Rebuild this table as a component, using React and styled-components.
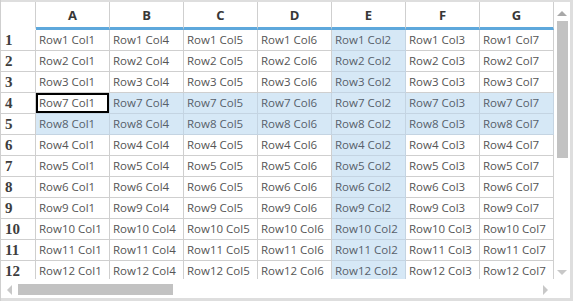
import React from "react";
import styled, { createGlobalStyle, css } from "styled-components";

const Global = createGlobalStyle`
  html, body { margin: 0; padding: 0; background: #fff; }
  body { font-family: "Open Sans", "Liberation Sans", sans-serif; }
`;

const Frame = styled.div`
  width: 573px;
  height: 301px;
  box-sizing: border-box;
  padding: 2px 3px 3px 1px;
  background: #dedede;
  border-left: 1px solid #cfcfcf;
  padding-left: 0;
`;

const Panel = styled.div`
  display: grid;
  grid-template-columns: 553px 16px;
  grid-template-rows: 277px 19px;
  background: #fff;
  height: 296px;
`;

const Viewport = styled.div`
  overflow: hidden;
  position: relative;
`;

const Grid = styled.div`
  display: grid;
  grid-template-columns: 35px repeat(7, 74px);
  grid-template-rows: 28px;
  grid-auto-rows: 21px;
  width: max-content;
`;

const Corner = styled.div`
  box-sizing: border-box;
  border-right: 1px solid #cfcfcf;
  border-bottom: 3px solid #fff;
`;

const ColHead = styled.div`
  box-sizing: border-box;
  border-right: 1px solid #cfcfcf;
  border-bottom: 3px solid #5ea8dc;
  display: flex;
  align-items: center;
  justify-content: center;
  font-family: "Open Sans", "Liberation Sans", sans-serif;
  font-weight: 700;
  font-size: 13px;
  color: #373737;
  padding-top: 1px;
`;

const RowHead = styled.div`
  box-sizing: border-box;
  border-right: 1px solid #cfcfcf;
  border-bottom: 1px solid #cfcfcf;
  padding-left: 4px;
  font-family: "Liberation Serif", "DejaVu Serif", serif;
  font-weight: 700;
  font-size: 15px;
  line-height: 21px;
  color: #3d3d3d;
`;

const Cell = styled.div`
  box-sizing: border-box;
  border-right: 1px solid #cfcfcf;
  border-bottom: 1px solid #cfcfcf;
  padding-left: 3px;
  font-family: "Open Sans", "Liberation Sans", sans-serif;
  font-size: 11.5px;
  line-height: 20px;
  color: #555;
  white-space: nowrap;
  overflow: hidden;
  background: ${(p) => (p.$hl ? "#d6e8f6" : "#fff")};
  ${(p) =>
    p.$hl &&
    css`
      border-right-color: #c4d4e2;
      border-bottom-color: #c4d4e2;
      color: #57606b;
    `}
  ${(p) =>
    p.$active &&
    css`
      background: #fff;
      box-shadow: inset 0 0 0 2px #000;
      color: #555;
    `}
`;

const VScroll = styled.div`
  position: relative;
  background: #fff;
  display: flex;
  flex-direction: column;
  align-items: center;
`;

const HScroll = styled.div`
  position: relative;
  background: #fff;
  display: flex;
  align-items: center;
  padding-top: 2px;
  box-sizing: border-box;
`;

const ScrollCorner = styled.div`
  background: #fff;
`;

const VThumb = styled.div`
  width: 11px;
  height: 137px;
  margin-top: 5px;
  background: #c2c2c2;
`;

const HThumb = styled.div`
  height: 11px;
  width: 155px;
  margin-left: 6px;
  background: #c2c2c2;
`;

const Arrow = styled.div`
  width: 0;
  height: 0;
  ${(p) =>
    p.$dir === "up" &&
    css`
      margin-top: 9px;
      border-left: 5px solid transparent;
      border-right: 5px solid transparent;
      border-bottom: 5px solid #a8a8a8;
    `}
  ${(p) =>
    p.$dir === "down" &&
    css`
      position: absolute;
      bottom: 4px;
      left: 3px;
      border-left: 5px solid transparent;
      border-right: 5px solid transparent;
      border-top: 5px solid #c8c8c8;
    `}
  ${(p) =>
    p.$dir === "left" &&
    css`
      margin-left: 6px;
      border-top: 5px solid transparent;
      border-bottom: 5px solid transparent;
      border-right: 5px solid #c8c8c8;
    `}
  ${(p) =>
    p.$dir === "right" &&
    css`
      position: absolute;
      right: 6px;
      top: 6px;
      border-top: 5px solid transparent;
      border-bottom: 5px solid transparent;
      border-left: 5px solid #c8c8c8;
    `}
`;

const headers = ["A", "B", "C", "D", "E", "F", "G"];
const colNums = [1, 4, 5, 6, 2, 3, 7];
const rowNums = [1, 2, 3, 7, 8, 4, 5, 6, 9, 10, 11, 12];

export default function App() {
  return (
    <>
      <Global />
      <Frame>
        <Panel>
          <Viewport>
            <Grid>
              <Corner />
              {headers.map((h) => (
                <ColHead key={h}>{h}</ColHead>
              ))}
              {rowNums.map((r, ri) => (
                <React.Fragment key={ri}>
                  <RowHead>{ri + 1}</RowHead>
                  {colNums.map((c, ci) => {
                    const rowSel = ri === 3 || ri === 4;
                    const colSel = ci === 4;
                    const active = ri === 3 && ci === 0;
                    return (
                      <Cell key={ci} $hl={rowSel || colSel} $active={active}>
                        Row{r} Col{c}
                      </Cell>
                    );
                  })}
                </React.Fragment>
              ))}
            </Grid>
          </Viewport>
          <VScroll>
            <Arrow $dir="up" />
            <VThumb />
            <Arrow $dir="down" />
          </VScroll>
          <HScroll>
            <Arrow $dir="left" />
            <HThumb />
            <Arrow $dir="right" />
          </HScroll>
          <ScrollCorner />
        </Panel>
      </Frame>
    </>
  );
}
